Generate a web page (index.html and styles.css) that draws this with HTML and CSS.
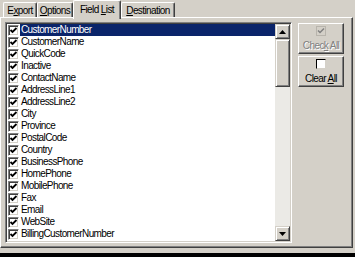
FILE: index.html
```html
<!DOCTYPE html>
<html lang="en">
<head>
    <meta charset="UTF-8">
    <title>Field List</title>
    <link rel="stylesheet" href="styles.css">
</head>
<body>
    <!-- Tab strip -->
    <div class="tabs">
        <div class="tab tab-export">E<u>x</u>port</div>
        <div class="tab tab-options"><u>O</u>ptions</div>
        <div class="tab tab-fields active">Field <u>L</u>ist</div>
        <div class="tab tab-dest"><u>D</u>estination</div>
    </div>

    <!-- Tab page -->
    <div class="panel">
        <div class="listbox">
            <ul class="items">
                <li class="item selected"><span class="box checked"></span><span class="label">CustomerNumber</span></li>
                <li class="item"><span class="box checked"></span><span class="label">CustomerName</span></li>
                <li class="item"><span class="box checked"></span><span class="label">QuickCode</span></li>
                <li class="item"><span class="box checked"></span><span class="label">Inactive</span></li>
                <li class="item"><span class="box checked"></span><span class="label">ContactName</span></li>
                <li class="item"><span class="box checked"></span><span class="label">AddressLine1</span></li>
                <li class="item"><span class="box checked"></span><span class="label">AddressLine2</span></li>
                <li class="item"><span class="box checked"></span><span class="label">City</span></li>
                <li class="item"><span class="box checked"></span><span class="label">Province</span></li>
                <li class="item"><span class="box checked"></span><span class="label">PostalCode</span></li>
                <li class="item"><span class="box checked"></span><span class="label">Country</span></li>
                <li class="item"><span class="box checked"></span><span class="label">BusinessPhone</span></li>
                <li class="item"><span class="box checked"></span><span class="label">HomePhone</span></li>
                <li class="item"><span class="box checked"></span><span class="label">MobilePhone</span></li>
                <li class="item"><span class="box checked"></span><span class="label">Fax</span></li>
                <li class="item"><span class="box checked"></span><span class="label">Email</span></li>
                <li class="item"><span class="box checked"></span><span class="label">WebSite</span></li>
                <li class="item"><span class="box checked"></span><span class="label">BillingCustomerNumber</span></li>
            </ul>
            <div class="scrollbar">
                <div class="sb-btn">
                    <svg width="7" height="4" viewBox="0 0 7 4"><polygon points="3.5,0 7,4 0,4" fill="#000"/></svg>
                </div>
                <div class="sb-thumb"></div>
                <div class="sb-track"></div>
                <div class="sb-btn">
                    <svg width="7" height="4" viewBox="0 0 7 4"><polygon points="0,0 7,0 3.5,4" fill="#000"/></svg>
                </div>
            </div>
        </div>

        <div class="side">
            <div class="btn disabled">
                <svg class="btn-icon" width="10" height="10" viewBox="0 0 10 10">
                    <rect x="0.5" y="0.5" width="9" height="9" fill="none" stroke="#b8b4ac"/>
                    <polyline points="2,4.5 4,6.5 8,2.5" fill="none" stroke="#808080" stroke-width="1.5"/>
                </svg>
                <span class="btn-text">Chec<u>k</u> All</span>
            </div>
            <div class="btn">
                <span class="btn-icon empty"></span>
                <span class="btn-text">Clear <u>A</u>ll</span>
            </div>
        </div>
    </div>

    <div class="edge"></div>
</body>
</html>
```

FILE: styles.css
```css
body {
    font-family: "Liberation Sans", Arial, sans-serif;
    font-size: 10px;
    letter-spacing: -0.6px;
    margin: 0;
    padding: 0;
    width: 355px;
    height: 257px;
    overflow: hidden;
    background-color: #d4d0c8;
    color: #000;
}

u {
    text-decoration: underline;
    text-underline-offset: 1px;
}

/* Tabs */
.tabs {
    display: flex;
    align-items: flex-end;
    height: 17px;
    padding-left: 3px;
}

.tab {
    height: 15px;
    line-height: 15px;
    text-align: center;
    border-top: 1px solid #fff;
    border-left: 1px solid #fff;
    border-right: 1px solid #404040;
    border-radius: 2px 2px 0 0;
    box-shadow: inset -1px 0 #808080;
    box-sizing: border-box;
    background-color: #d4d0c8;
}

.tab-export { width: 34px; }
.tab-options { width: 36px; }
.tab-fields { width: 48px; }
.tab-dest { width: 54px; }

.tab.active {
    height: 19px;
    line-height: 17px;
    margin-bottom: -2px;
    position: relative;
    z-index: 1;
}

/* Tab page */
.panel {
    display: flex;
    align-items: flex-start;
    height: 231px;
    box-sizing: border-box;
    padding: 4px 0 0 4px;
    margin-right: 2px;
    border-top: 1px solid #fff;
    border-left: 1px solid #fff;
    border-right: 1px solid #404040;
    border-bottom: 1px solid #404040;
    box-shadow: inset -1px -1px #808080;
}

/* List box */
.listbox {
    display: flex;
    width: 287px;
    height: 221px;
    box-sizing: border-box;
    padding: 1px;
    border-top: 1px solid #808080;
    border-left: 1px solid #808080;
    border-right: 1px solid #fff;
    border-bottom: 1px solid #fff;
    box-shadow: inset 1px 1px #404040, inset -1px -1px #d4d0c8;
}

.items {
    flex: 1;
    list-style: none;
    margin: 0;
    padding: 0;
    background-color: #fff;
    overflow: hidden;
}

.item {
    display: flex;
    align-items: center;
    height: 12px;
}

.box {
    width: 11px;
    height: 11px;
    box-sizing: border-box;
    margin-left: 1px;
    border-top: 1px solid #808080;
    border-left: 1px solid #808080;
    border-right: 1px solid #fff;
    border-bottom: 1px solid #fff;
    box-shadow: inset 1px 1px #404040, inset -1px -1px #d4d0c8;
    background-color: #fff;
    flex-shrink: 0;
}

.box.checked {
    background-image: url("data:image/svg+xml;utf8,<svg xmlns='http://www.w3.org/2000/svg' width='9' height='9' viewBox='0 0 9 9'><polyline points='1.5,4 3.5,6 7.5,2' fill='none' stroke='black' stroke-width='1.8'/></svg>");
    background-repeat: no-repeat;
    background-position: center;
}

.label {
    flex: 1;
    height: 12px;
    line-height: 12px;
    padding-left: 1px;
    margin-left: 1px;
    white-space: nowrap;
}

.item.selected .label {
    background-color: #0a246a;
    color: #fff;
}

/* Scroll bar */
.scrollbar {
    display: flex;
    flex-direction: column;
    width: 15px;
    background-color: #ebeae6;
}

.sb-btn,
.sb-thumb {
    box-sizing: border-box;
    background-color: #d4d0c8;
    border-top: 1px solid #d4d0c8;
    border-left: 1px solid #d4d0c8;
    border-right: 1px solid #404040;
    border-bottom: 1px solid #404040;
    box-shadow: inset 1px 1px #fff, inset -1px -1px #808080;
}

.sb-btn {
    height: 15px;
    display: flex;
    align-items: center;
    justify-content: center;
}

.sb-thumb {
    height: 48px;
}

.sb-track {
    flex: 1;
}

/* Side buttons */
.side {
    display: flex;
    flex-direction: column;
    gap: 2px;
    margin: 1px 0 0 6px;
}

.btn {
    display: flex;
    flex-direction: column;
    align-items: center;
    justify-content: center;
    gap: 4px;
    width: 46px;
    height: 31px;
    box-sizing: border-box;
    border-top: 1px solid #fff;
    border-left: 1px solid #fff;
    border-right: 1px solid #404040;
    border-bottom: 1px solid #404040;
    box-shadow: inset -1px -1px #808080;
}

.btn-text {
    line-height: 11px;
    white-space: nowrap;
}

.btn.disabled .btn-text {
    color: #808080;
    text-shadow: 1px 1px 0 #fff;
}

.btn-icon.empty {
    display: block;
    width: 10px;
    height: 10px;
    box-sizing: border-box;
    background-color: #fff;
    border-top: 1px solid #000;
    border-left: 1px solid #000;
    border-right: 1px solid #d4d0c8;
    border-bottom: 1px solid #d4d0c8;
}

/* Bottom of the dialog */
.edge {
    height: 4px;
    margin-top: 5px;
    background-color: #000;
}
```
